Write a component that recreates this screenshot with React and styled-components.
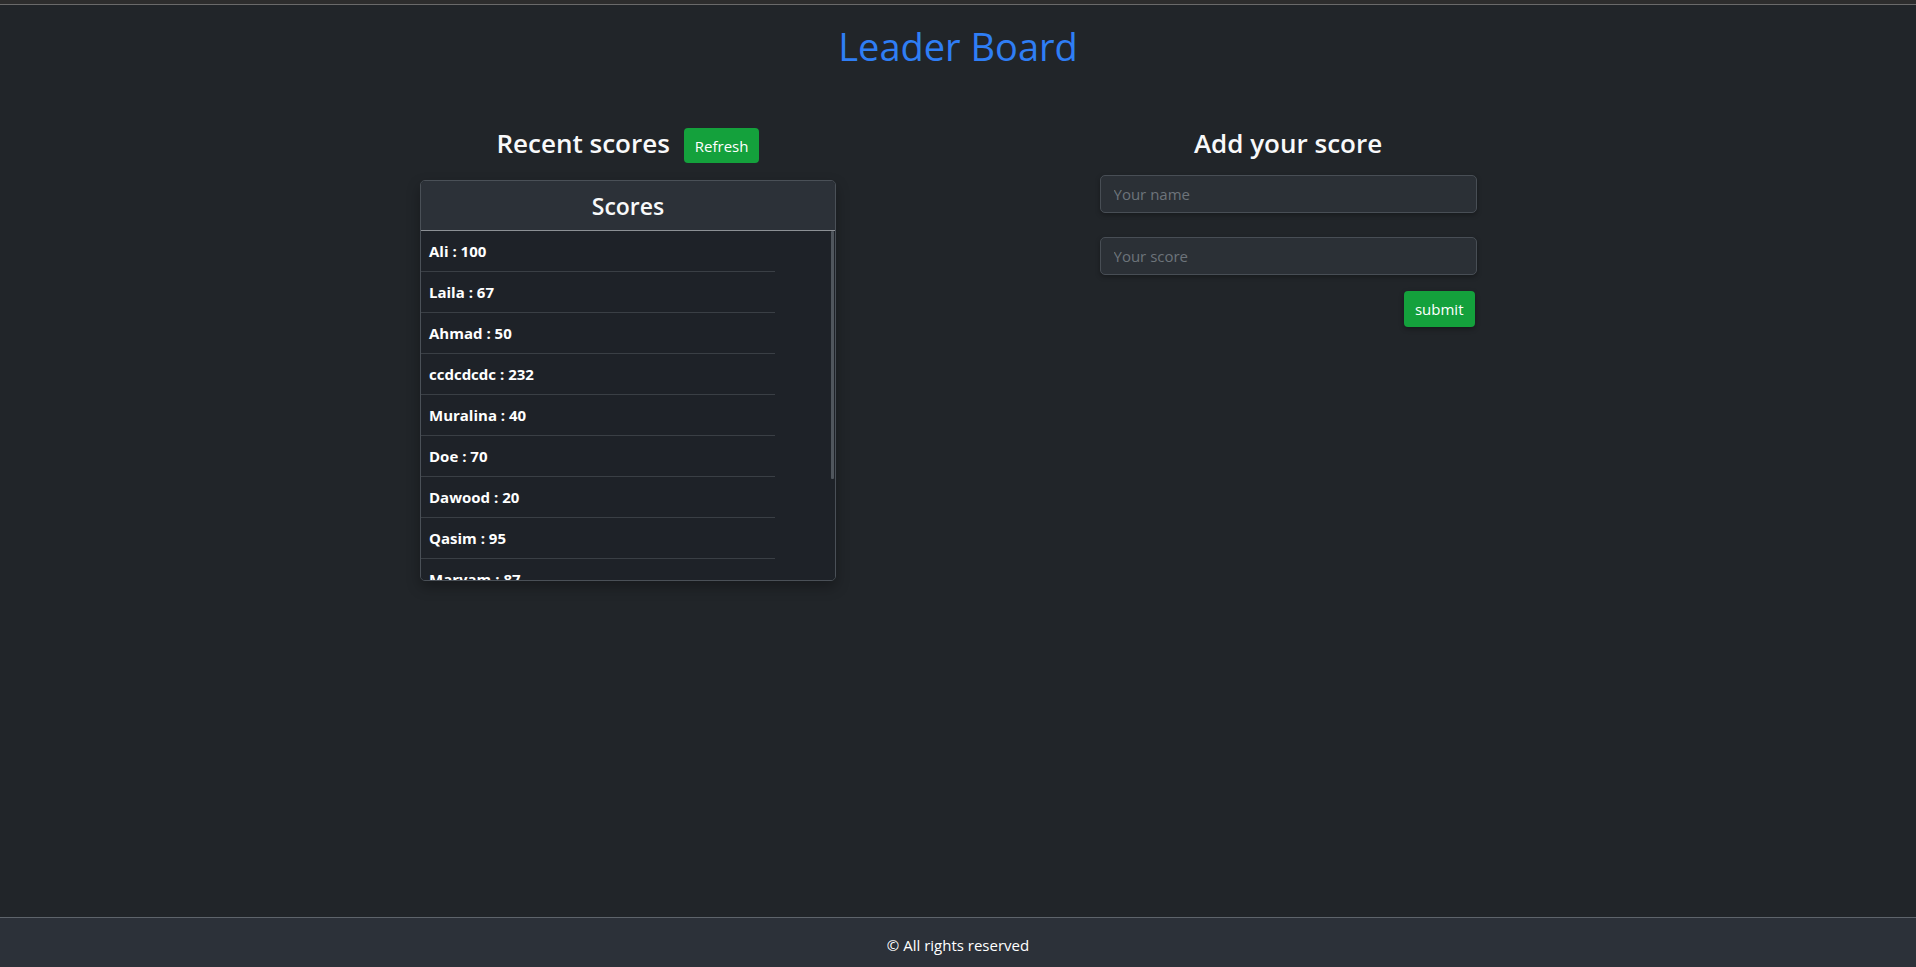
import React from "react";
import styled, { createGlobalStyle } from "styled-components";

const GlobalStyle = createGlobalStyle`
  html, body { margin: 0; padding: 0; }
  body {
    background: #212529;
    color: #f8f9fa;
    font-family: "Open Sans", "Noto Sans", "Liberation Sans", sans-serif;
  }
  * { box-sizing: border-box; }
`;

const Page = styled.div`
  min-height: 100vh;
  display: flex;
  flex-direction: column;
`;

const TopStrip = styled.div`
  height: 5px;
  background: #2d2d2d;
  border-bottom: 1px solid #6a6a6a;
`;

const Title = styled.h1`
  margin: 17px 0 0;
  text-align: center;
  font-size: 38px;
  line-height: 48px;
  font-weight: 500;
  color: #2f7ef5;
`;

const Main = styled.main`
  display: grid;
  grid-template-columns: 660px 660px;
  justify-content: center;
  margin-top: 56px;
`;

const Column = styled.section`
  display: flex;
  flex-direction: column;
  align-items: center;
`;

const HeadRow = styled.div`
  display: flex;
  align-items: flex-start;
  gap: 14px;
`;

const Heading = styled.h3`
  margin: 0;
  font-size: 26px;
  line-height: 34px;
  font-weight: 600;
  color: #f8f9fa;
`;

const GreenButton = styled.button`
  height: ${(p) => p.$h}px;
  margin-top: ${(p) => p.$top || 0}px;
  padding: 0 11px;
  border: none;
  border-radius: 4px;
  background: #14a13c;
  color: #ffffff;
  font-family: inherit;
  font-size: 15px;
  cursor: pointer;
  box-shadow: ${(p) => (p.$shadow ? "0 2px 5px rgba(0,0,0,0.35)" : "none")};
`;

const Card = styled.div`
  position: relative;
  width: 416px;
  margin-top: 17px;
  border: 1px solid #4a5057;
  border-radius: 5px;
  overflow: hidden;
  box-shadow: 0 6px 14px rgba(0, 0, 0, 0.3);
`;

const CardHeader = styled.div`
  height: 50px;
  display: flex;
  align-items: center;
  justify-content: center;
  background: #2c3138;
  border-bottom: 1px solid #8c9095;
  font-size: 23px;
  font-weight: 600;
  color: #f8f9fa;
`;

const List = styled.ul`
  list-style: none;
  margin: 0;
  padding: 0;
  height: 349px;
  overflow-y: auto;
  background: #1e2228;
  scrollbar-width: none;

  &::-webkit-scrollbar { display: none; }
`;

const ScrollThumb = styled.div`
  position: absolute;
  top: 50px;
  right: 1px;
  width: 3px;
  height: 248px;
  border-radius: 1px;
  background: #50565d;
`;

const Item = styled.li`
  width: 354px;
  height: 41px;
  padding: 0 8px;
  display: flex;
  align-items: center;
  border-bottom: 1px solid #3a3f45;
  font-size: 15px;
  font-weight: 700;
  color: #ffffff;
`;

const Form = styled.form`
  width: 377px;
  margin-top: 15px;
  display: flex;
  flex-direction: column;
  gap: 24px;
`;

const Input = styled.input`
  height: 38px;
  width: 100%;
  padding: 0 13px;
  border: 1px solid #484e55;
  border-radius: 5px;
  background: #2b3036;
  color: #e9ecef;
  font-family: inherit;
  font-size: 15px;
  box-shadow: 0 2px 5px rgba(0, 0, 0, 0.3);
  outline: none;

  &::placeholder { color: #6d747b; }
`;

const SubmitRow = styled.div`
  display: flex;
  justify-content: flex-end;
  margin-top: -8px;
  padding-right: 2px;
`;

const Footer = styled.footer`
  margin-top: auto;
  height: 50px;
  padding-top: 4px;
  display: flex;
  align-items: center;
  justify-content: center;
  background: #2c3139;
  border-top: 1px solid #5e646b;
  font-size: 15px;
  color: #ffffff;
`;

const scores = [
  ["Ali", 100],
  ["Laila", 67],
  ["Ahmad", 50],
  ["ccdcdcdc", 232],
  ["Muralina", 40],
  ["Doe", 70],
  ["Dawood", 20],
  ["Qasim", 95],
  ["Maryam", 87],
  ["Sara", 60],
  ["Hamid", 45],
  ["Zahra", 33],
];

export default function App() {
  return (
    <>
      <GlobalStyle />
      <Page>
        <TopStrip />
        <Title>Leader Board</Title>
        <Main>
          <Column>
            <HeadRow>
              <Heading>Recent scores</Heading>
              <GreenButton type="button" $h={35} $top={2}>Refresh</GreenButton>
            </HeadRow>
            <Card>
              <CardHeader>Scores</CardHeader>
              <List>
                {scores.map(([name, score]) => (
                  <Item key={name}>
                    {name} : {score}
                  </Item>
                ))}
              </List>
              <ScrollThumb />
            </Card>
          </Column>
          <Column>
            <Heading>Add your score</Heading>
            <Form onSubmit={(e) => e.preventDefault()}>
              <Input type="text" placeholder="Your name" />
              <Input type="number" placeholder="Your score" />
              <SubmitRow>
                <GreenButton type="submit" $h={36} $shadow>submit</GreenButton>
              </SubmitRow>
            </Form>
          </Column>
        </Main>
        <Footer>© All rights reserved</Footer>
      </Page>
    </>
  );
}
